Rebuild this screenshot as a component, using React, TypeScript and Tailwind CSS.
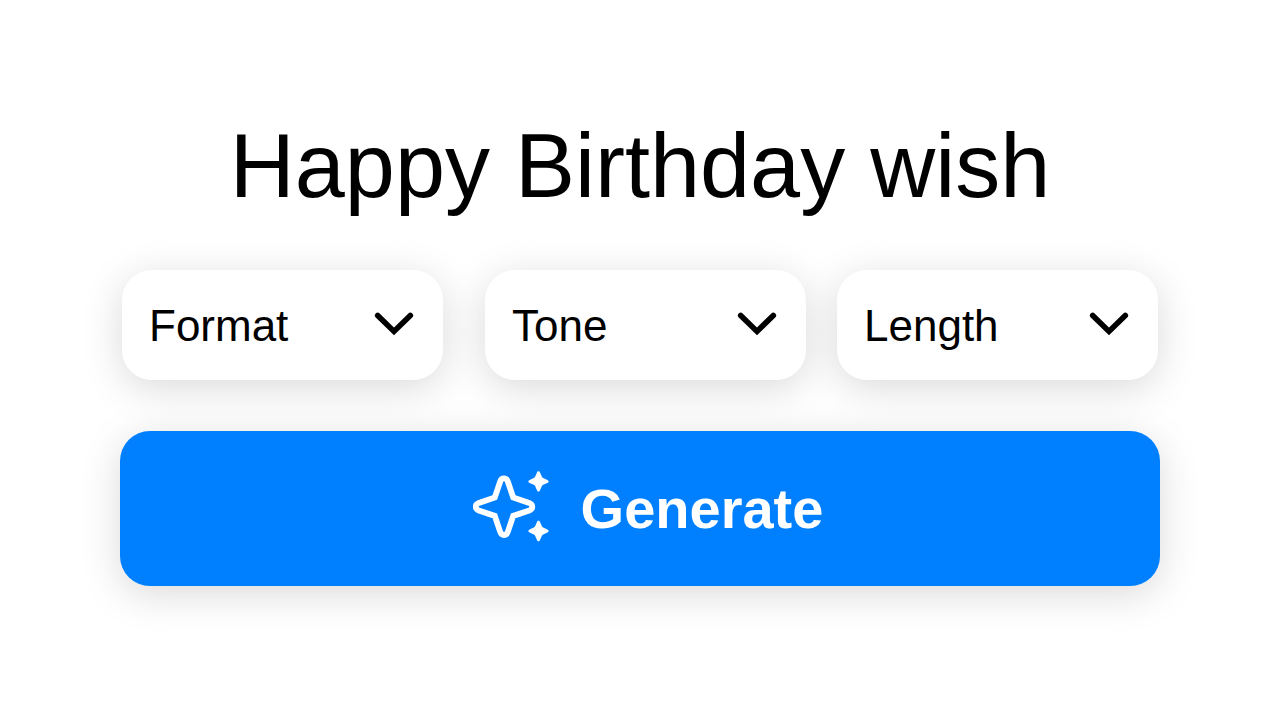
import { useState } from "react";

type PickerProps = {
  id: string;
  label: string;
  options: string[];
  className?: string;
};

function Picker({ id, label, options, className = "" }: PickerProps) {
  const [value, setValue] = useState("");
  return (
    <div
      className={`grid min-w-0 flex-1 items-center rounded-[30px] bg-white shadow-[0_8px_40px_rgba(0,0,0,0.15)] ${className}`}
    >
      <select
        id={id}
        aria-label={label}
        value={value}
        onChange={(e) => setValue(e.target.value)}
        className="col-start-1 row-start-1 h-[110px] w-full cursor-pointer appearance-none rounded-[30px] bg-transparent pt-[2px] pr-20 pl-[27px] text-[44px] text-black"
      >
        <option value="">{label}</option>
        {options.map((o) => (
          <option key={o} value={o}>
            {o}
          </option>
        ))}
      </select>
      <svg
        viewBox="0 0 40 26"
        className="pointer-events-none col-start-1 row-start-1 mr-[29px] h-[26px] w-10 justify-self-end"
        fill="none"
        stroke="#000"
        strokeWidth="5.6"
        strokeLinecap="round"
        strokeLinejoin="miter"
        aria-hidden="true"
      >
        <path d="M3.7 3.4L20 19.4L36.3 3.4" />
      </svg>
    </div>
  );
}

function Sparkle({ transform }: { transform: string }) {
  return (
    <path
      transform={transform}
      d="M0 -10.2C0.8 -10.2 1.2 -9.7 1.5 -8.9L3.4 -4.7C3.7 -4.1 4.1 -3.7 4.7 -3.4L8.9 -1.5C10.6 -0.7 10.6 0.7 8.9 1.5L4.7 3.4C4.1 3.7 3.7 4.1 3.4 4.7L1.5 8.9C1.2 9.7 0.8 10.2 0 10.2C-0.8 10.2 -1.2 9.7 -1.5 8.9L-3.4 4.7C-3.7 4.1 -4.1 3.7 -4.7 3.4L-8.9 1.5C-10.6 0.7 -10.6 -0.7 -8.9 -1.5L-4.7 -3.4C-4.1 -3.7 -3.7 -4.1 -3.4 -4.7L-1.5 -8.9C-1.2 -9.7 -0.8 -10.2 0 -10.2Z"
      fill="#fff"
    />
  );
}

function Sparkles() {
  return (
    <svg viewBox="0 0 80 76" className="h-[76px] w-20 shrink-0" fill="none" aria-hidden="true">
      <path
        transform="translate(31 35.7)"
        d="M-3.8 -25.2C-2.4 -29.3 2.4 -29.3 3.8 -25.2L9.2 -9.2L25.2 -3.8C29.3 -2.2 29.3 2.2 25.2 3.8L9.2 9.2L3.8 25.2C2.4 29.3 -2.4 29.3 -3.8 25.2L-9.2 9.2L-25.2 3.8C-29.3 2.2 -29.3 -2.2 -25.2 -3.8L-9.2 -9.2Z"
        stroke="#fff"
        strokeWidth="5.8"
        strokeLinejoin="miter"
      />
      <Sparkle transform="translate(65.5 10.4)" />
      <Sparkle transform="translate(65.5 60)" />
    </svg>
  );
}

export default function App() {
  return (
    <main className="min-h-screen bg-white px-[120px] pt-[116px] font-['Liberation_Sans',Arial,sans-serif] text-black">
      <h1 className="text-center text-[90px] leading-[100px] font-normal">Happy Birthday wish</h1>
      <form onSubmit={(e) => e.preventDefault()}>
        <div className="mt-[54px] flex px-[2px]">
          <Picker id="format" label="Format" options={["Message", "Poem", "Email"]} />
          <Picker
            id="tone"
            label="Tone"
            options={["Friendly", "Funny", "Formal"]}
            className="mr-[31px] ml-[42px]"
          />
          <Picker id="length" label="Length" options={["Short", "Medium", "Long"]} />
        </div>
        <button
          type="submit"
          className="mt-[51px] flex h-[155px] w-full cursor-pointer items-center justify-center gap-7 rounded-[30px] bg-[#0080ff] pl-4 text-[56px] font-bold text-white shadow-[0_8px_40px_rgba(0,0,0,0.15)]"
        >
          <Sparkles />
          Generate
        </button>
      </form>
    </main>
  );
}
